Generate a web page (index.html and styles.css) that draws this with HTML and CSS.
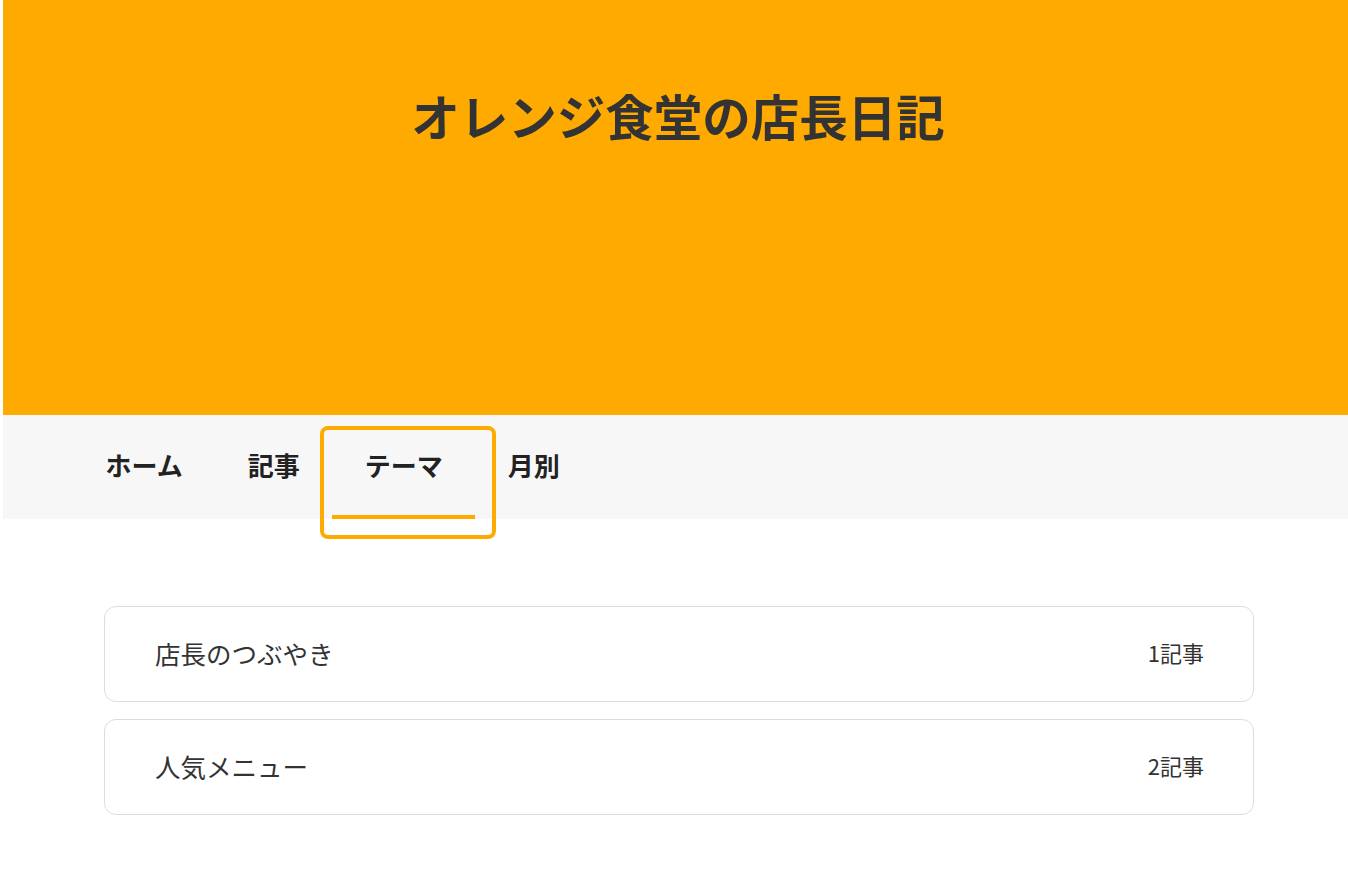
FILE: index.html
```html
<!DOCTYPE html>
<html lang="ja">
<head>
    <meta charset="UTF-8">
    <meta name="viewport" content="width=device-width, initial-scale=1.0">
    <title>オレンジ食堂の店長日記</title>
    <link rel="stylesheet" href="styles.css">
</head>
<body>

    <div class="page">
        <!-- ヘッダー -->
        <header class="site-header">
            <h1 class="site-title">オレンジ食堂の店長日記</h1>
        </header>

        <!-- タブメニュー -->
        <nav class="tabs">
            <a class="tab" href="#">ホーム</a>
            <a class="tab" href="#">記事</a>
            <a class="tab active focused" href="#">テーマ</a>
            <a class="tab" href="#">月別</a>
        </nav>

        <!-- テーマ一覧 -->
        <main class="theme-list">
            <a class="theme-card" href="#">
                <span class="theme-name">店長のつぶやき</span>
                <span class="theme-count">1記事</span>
            </a>
            <a class="theme-card" href="#">
                <span class="theme-name">人気メニュー</span>
                <span class="theme-count">2記事</span>
            </a>
        </main>
    </div>

</body>
</html>
```

FILE: styles.css
```css
html {
    overflow: hidden;
}

body {
    margin: 0;
    padding: 0;
    background-color: #fff;
    font-family: "Noto Sans CJK JP", "Noto Sans", sans-serif;
    color: #333;
}

.page {
    width: 1350px;
    margin-left: 3px;
}

.site-header {
    height: 415px;
    box-sizing: border-box;
    padding-top: 76px;
    background-color: #ffaa00;
}

.site-title {
    margin: 0;
    font-size: 48.5px;
    line-height: 78px;
    font-weight: bold;
    text-align: center;
    color: #333;
}

.tabs {
    display: flex;
    height: 104px;
    padding-left: 70px;
    background-color: #f7f7f7;
}

.tab {
    position: relative;
    padding: 35px 32.5px 34px;
    font-size: 26px;
    line-height: 30px;
    font-weight: bold;
    color: #222;
    text-decoration: none;
    border-bottom: 4px solid transparent;
}

.tab.active {
    border-bottom-color: #ffaa00;
}

.tab.focused::after {
    content: "";
    position: absolute;
    top: 11px;
    left: -12px;
    right: -21px;
    bottom: -24px;
    border: 4px solid #ffaa00;
    border-radius: 8px;
}

.theme-list {
    display: flex;
    flex-direction: column;
    gap: 17px;
    width: 1150px;
    margin: 87px 0 0 101px;
}

.theme-card {
    display: flex;
    justify-content: space-between;
    align-items: center;
    height: 96px;
    box-sizing: border-box;
    padding: 0 49px 4px 50px;
    border: 1px solid #ddd;
    border-radius: 12px;
    color: #333;
    text-decoration: none;
}

.theme-name {
    font-size: 25.5px;
}

.theme-count {
    font-size: 22px;
}
```
